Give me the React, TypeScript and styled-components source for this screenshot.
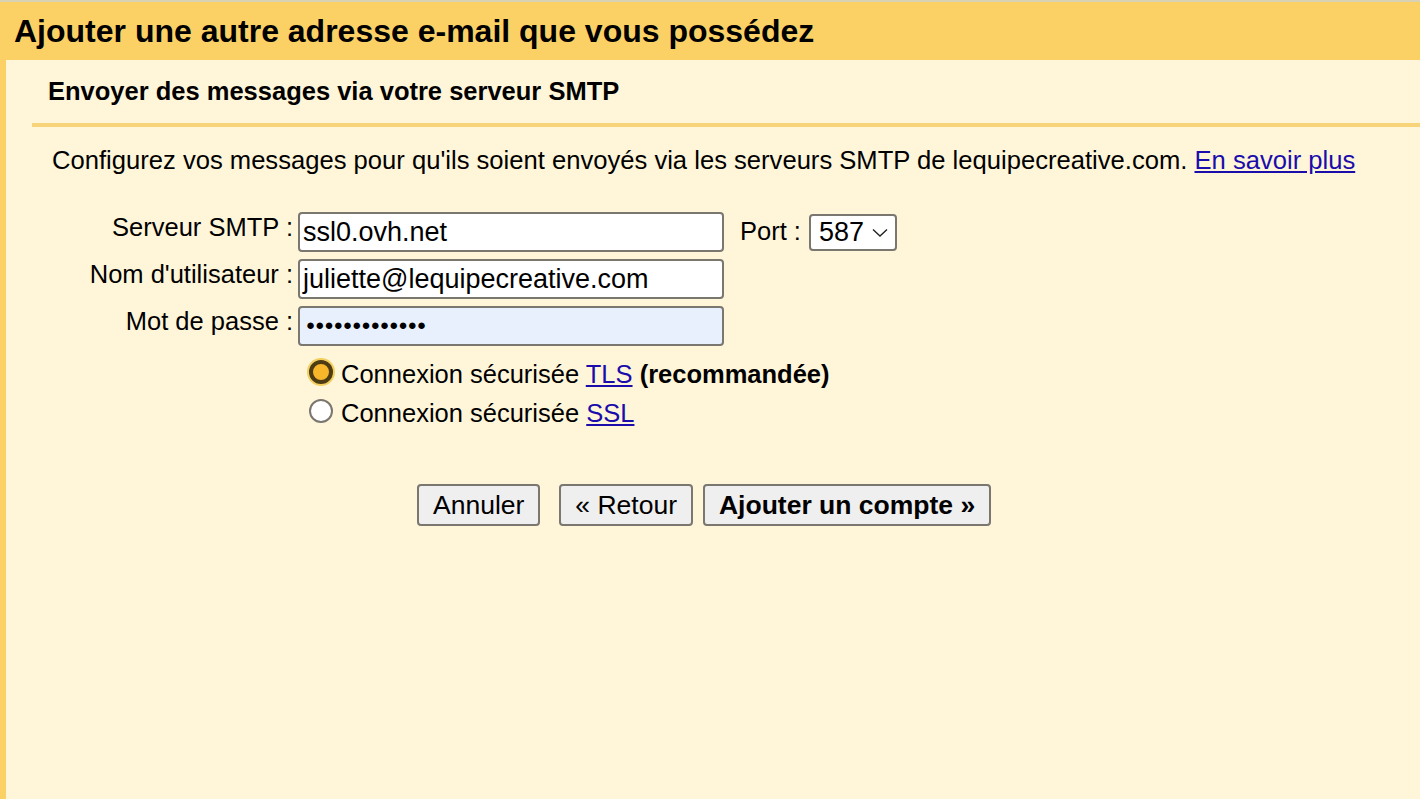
import React from "react";
import styled, { createGlobalStyle } from "styled-components";

const GlobalStyle = createGlobalStyle`
  html, body {
    margin: 0;
    padding: 0;
    background: #fff6da;
  }
  body {
    font-family: "Liberation Sans", Arial, sans-serif;
    color: #000;
  }
`;

const Page = styled.div`
  width: 1420px;
  height: 799px;
  overflow: hidden;
  border-top: 2px solid #d9d1b3;
  box-sizing: border-box;
  display: flex;
  flex-direction: column;
`;

const Header = styled.div`
  height: 58px;
  background: #fbd166;
  display: flex;
  align-items: center;
  padding-left: 14px;
  font-size: 32px;
  font-weight: 700;
  flex-shrink: 0;
`;

const Body = styled.div`
  flex: 1;
  border-left: 6px solid #fbd166;
  background: #fff6da;
`;

const SectionTitle = styled.div`
  height: 63px;
  display: flex;
  align-items: center;
  padding-left: 42px;
  font-size: 25.5px;
  font-weight: 700;
`;

const Rule = styled.div`
  margin-left: 26px;
  height: 4px;
  background: #f7d37a;
`;

const Intro = styled.p`
  margin: 18px 0 0 46px;
  font-size: 25.6px;
  line-height: 30px;
`;

const Link = styled.a`
  color: #1a0dab;
  text-decoration: underline;
  cursor: pointer;
`;

const Form = styled.div`
  margin-top: 37px;
  display: grid;
  grid-template-columns: 287px auto;
  row-gap: 7px;
  column-gap: 5px;
`;

const Label = styled.div`
  text-align: right;
  font-size: 25.5px;
  line-height: 30px;
`;

const FieldRow = styled.div`
  display: flex;
  align-items: center;
  gap: 16px;
`;

const Input = styled.div<{ $filled?: boolean }>`
  width: 426px;
  height: 40px;
  box-sizing: border-box;
  border: 2px solid #7a7670;
  border-radius: 4px;
  background: ${(p) => (p.$filled ? "#e8f0fe" : "#ffffff")};
  font-size: 27px;
  display: flex;
  align-items: center;
  padding-left: 3px;
`;

const Dots = styled.span`
  font-size: 15px;
  letter-spacing: 0.2px;
  margin-top: -3px;
  padding-left: 3px;
`;

const PortLabel = styled.span`
  font-size: 25.5px;
  margin-top: -2px;
`;

const Select = styled.div`
  margin-left: -8px;
  height: 37px;
  width: 88px;
  box-sizing: border-box;
  border: 2px solid #7a7670;
  border-radius: 4px;
  background: #fff;
  display: flex;
  align-items: center;
  justify-content: space-between;
  padding: 0 6px 0 8px;
  font-size: 27px;
`;

const Radios = styled.div`
  grid-column: 2;
  margin-top: 6px;
  margin-left: 11px;
  display: flex;
  flex-direction: column;
  gap: 9px;
`;

const RadioRow = styled.div`
  display: flex;
  align-items: center;
  gap: 8px;
  font-size: 25.5px;
  line-height: 30px;
`;

const Radio = styled.span<{ $checked?: boolean }>`
  width: 24px;
  height: 24px;
  box-sizing: border-box;
  border-radius: 50%;
  margin-top: -5px;
  flex-shrink: 0;
  border: ${(p) => (p.$checked ? "4px solid #4d3c14" : "2px solid #7a7670")};
  background: ${(p) => (p.$checked ? "#f8b62a" : "#ffffff")};
  box-shadow: ${(p) => (p.$checked ? "0 0 0 2px #f2cf5e" : "none")};
`;

const Buttons = styled.div`
  margin-top: 56px;
  padding-left: 411px;
  display: flex;
`;

const Button = styled.button<{ $bold?: boolean; $gap?: number }>`
  height: 42px;
  box-sizing: border-box;
  border: 2px solid #7a7670;
  border-radius: 4px;
  background: #efefef;
  font-family: "Liberation Sans", Arial, sans-serif;
  font-size: 26.5px;
  font-weight: ${(p) => (p.$bold ? 700 : 400)};
  padding: 0 14px;
  margin-left: ${(p) => p.$gap ?? 0}px;
  color: #000;
`;

export default function App() {
  return (
    <>
      <GlobalStyle />
      <Page>
        <Header>Ajouter une autre adresse e-mail que vous possédez</Header>
        <Body>
          <SectionTitle>Envoyer des messages via votre serveur SMTP</SectionTitle>
          <Rule />
          <Intro>
            Configurez vos messages pour qu'ils soient envoyés via les serveurs SMTP de
            lequipecreative.com. <Link>En savoir plus</Link>
          </Intro>
          <Form>
            <Label>Serveur SMTP :</Label>
            <FieldRow>
              <Input>ssl0.ovh.net</Input>
              <PortLabel>Port :</PortLabel>
              <Select>
                587
                <svg width="18" height="16" viewBox="0 0 18 16">
                  <path d="M2 5.5l7 6.5 7-6.5" fill="none" stroke="#222" strokeWidth="1.4" />
                </svg>
              </Select>
            </FieldRow>
            <Label>Nom d'utilisateur :</Label>
            <FieldRow>
              <Input>juliette@lequipecreative.com</Input>
            </FieldRow>
            <Label>Mot de passe :</Label>
            <FieldRow>
              <Input $filled>
                <Dots>●●●●●●●●●●●●●</Dots>
              </Input>
            </FieldRow>
            <Radios>
              <RadioRow>
                <Radio $checked />
                <span>
                  Connexion sécurisée <Link>TLS</Link> <b>(recommandée)</b>
                </span>
              </RadioRow>
              <RadioRow>
                <Radio />
                <span>
                  Connexion sécurisée <Link>SSL</Link>
                </span>
              </RadioRow>
            </Radios>
          </Form>
          <Buttons>
            <Button>Annuler</Button>
            <Button $gap={19}>« Retour</Button>
            <Button $gap={10} $bold>
              Ajouter un compte »
            </Button>
          </Buttons>
        </Body>
      </Page>
    </>
  );
}
